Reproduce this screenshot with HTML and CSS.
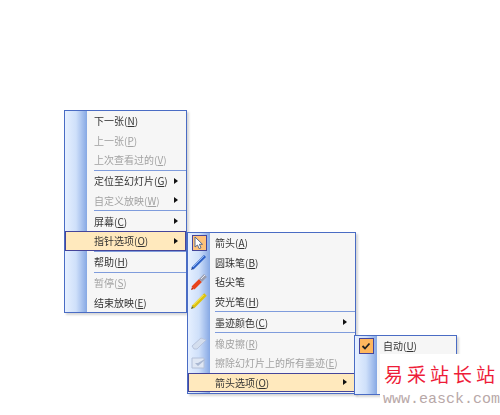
FILE: index.html
```html
<!DOCTYPE html>
<html lang="en">
<head>
  <meta charset="UTF-8">
  <title>指针选项</title>
  <link rel="stylesheet" href="styles.css">
</head>
<body>
  <div class="menu menu-main">
    <div class="row"><span class="icon"></span><span class="label">下一张(<u>N</u>)</span></div>
    <div class="row off"><span class="icon"></span><span class="label">上一张(<u>P</u>)</span></div>
    <div class="row off"><span class="icon"></span><span class="label">上次查看过的(<u>V</u>)</span></div>
    <div class="sep"></div>
    <div class="row"><span class="icon"></span><span class="label">定位至幻灯片(<u>G</u>)</span><span class="arrow"></span></div>
    <div class="row off"><span class="icon"></span><span class="label">自定义放映(<u>W</u>)</span><span class="arrow"></span></div>
    <div class="sep"></div>
    <div class="row"><span class="icon"></span><span class="label">屏幕(<u>C</u>)</span><span class="arrow"></span></div>
    <div class="row active"><span class="icon"></span><span class="label">指针选项(<u>O</u>)</span><span class="arrow"></span></div>
    <div class="sep"></div>
    <div class="row"><span class="icon"></span><span class="label">帮助(<u>H</u>)</span></div>
    <div class="sep"></div>
    <div class="row off"><span class="icon"></span><span class="label">暂停(<u>S</u>)</span></div>
    <div class="row"><span class="icon"></span><span class="label">结束放映(<u>E</u>)</span></div>
  </div>

  <div class="menu menu-pointer">
    <div class="row">
      <span class="icon"><span class="tick">
        <svg width="12" height="14" viewBox="0 0 12 14"><path d="M2 1v10l2.500-2 1.600 3.600 1.900-.8L6.400 8.300H9.500z" fill="#fff" stroke="#5a6a8a"/></svg>
      </span></span>
      <span class="label">箭头(<u>A</u>)</span>
    </div>
    <div class="row">
      <span class="icon">
        <svg width="18" height="18" viewBox="0 0 18 18"><path d="M2.500 15.500 15 3" stroke="#2f62c8" stroke-width="3"/><path d="M3 14 14 3" stroke="#8fb6f0" stroke-width="1"/><path d="M1 17l1-2.500 1.500 1.500z" fill="#1b3a80"/></svg>
      </span>
      <span class="label">圆珠笔(<u>B</u>)</span>
    </div>
    <div class="row">
      <span class="icon">
        <svg width="18" height="18" viewBox="0 0 18 18"><path d="M3 15 10.500 7.500" stroke="#e8431c" stroke-width="4"/><path d="M10.500 7.500 15.500 2.500" stroke="#9a9eb0" stroke-width="4"/><path d="M11 6 15 2" stroke="#e4e6ee" stroke-width="1"/><path d="M1 17l1-3 2 2z" fill="#c02a10"/></svg>
      </span>
      <span class="label">毡尖笔</span>
    </div>
    <div class="row">
      <span class="icon">
        <svg width="18" height="18" viewBox="0 0 18 18"><path d="M3 15 15.500 2.500" stroke="#dcc20e" stroke-width="3.500"/><path d="M3.500 13 13.500 3" stroke="#fff27a" stroke-width="1"/><path d="M1 17l1-3 2 2z" fill="#6a6a20"/></svg>
      </span>
      <span class="label">荧光笔(<u>H</u>)</span>
    </div>
    <div class="sep"></div>
    <div class="row"><span class="icon"></span><span class="label">墨迹颜色(<u>C</u>)</span><span class="arrow"></span></div>
    <div class="sep"></div>
    <div class="row off">
      <span class="icon">
        <svg width="18" height="18" viewBox="0 0 18 18"><path d="M2 12 11 4l5 2-9 9H4z" fill="#d4deee" stroke="#b8c4dc"/></svg>
      </span>
      <span class="label">橡皮擦(<u>R</u>)</span>
    </div>
    <div class="row off">
      <span class="icon">
        <svg width="18" height="18" viewBox="0 0 18 18"><path d="M2 4h12v10H2z" fill="#dfe7f4" stroke="#b4c0d8"/><path d="M5 9l3 3 8-7-3 1-5 3z" fill="#aab8d2"/></svg>
      </span>
      <span class="label">擦除幻灯片上的所有墨迹(<u>E</u>)</span>
    </div>
    <div class="row active"><span class="icon"></span><span class="label">箭头选项(<u>O</u>)</span><span class="arrow"></span></div>
  </div>

  <div class="menu menu-arrow">
    <div class="row">
      <span class="icon"><span class="tick check">
        <svg width="10" height="8" viewBox="0 0 10 8"><path d="M1.500 4 4 6.500 8.500 1.500" fill="none" stroke="#222" stroke-width="1.800"/></svg>
      </span></span>
      <span class="label">自动(<u>U</u>)</span>
    </div>
  </div>

  <div class="watermark">
    <div class="wm-name">易采站长站</div>
    <div class="wm-url">www.easck.com</div>
  </div>
</body>
</html>
```

FILE: styles.css
```css
html, body {
  margin: 0;
  height: 415px;
  overflow: hidden;
  background: white;
}
body {
  font-family: "Noto Sans CJK SC", "Liberation Sans", sans-serif;
  font-size: 10px;
  color: #333;
}
.menu {
  position: absolute;
  box-sizing: border-box;
  border: 1px solid #4a6cc4;
  background:
    linear-gradient(to right, #e6f0ff, #cfe0fa 50%, #86a8e4) no-repeat 0 0 / 22px 100%,
    #f6f6f6;
  box-shadow: 2px 2px 2px rgba(90, 90, 90, 0.25);
  filter: blur(0.35px);
}
.menu-main {
  left: 64px;
  top: 110px;
  width: 123px;
  height: 203px;
}
.menu-pointer {
  left: 187px;
  top: 232px;
  width: 169px;
  height: 162px;
}
.menu-arrow {
  left: 354px;
  top: 335px;
  width: 103px;
  height: 60px;
}
.row {
  display: flex;
  align-items: center;
  height: 19.5px;
  box-sizing: border-box;
  padding-right: 8px;
}
.row u {
  text-underline-offset: 1px;
}
.off {
  color: #a2a2a2;
}
.active {
  background: #ffe9bd;
  outline: 1px solid #45459a;
  outline-offset: -1px;
}
.icon {
  flex: none;
  width: 22px;
  height: 100%;
  display: flex;
  align-items: center;
  justify-content: center;
}
.label {
  flex: 1;
  padding-left: 7px;
  white-space: nowrap;
}
.menu-pointer .label {
  padding-left: 5px;
}
.menu-arrow .label {
  padding-left: 6px;
}
.arrow {
  flex: none;
  width: 0;
  height: 0;
  border-left: 4px solid #111;
  border-top: 3.5px solid transparent;
  border-bottom: 3.5px solid transparent;
}
.sep {
  height: 1.5px;
  margin-left: 29px;
  background: linear-gradient(#7f9cdc 1px, transparent 1px);
}
.menu-pointer .sep {
  margin-left: 27px;
}
.tick {
  width: 15px;
  height: 16px;
  display: flex;
  align-items: center;
  justify-content: center;
  box-sizing: border-box;
  background: #ffc27a;
  border: 1px solid #45459a;
}
.check {
  background: #ffb75e;
}
.watermark {
  position: absolute;
  left: 380px;
  top: 354px;
  width: 120px;
  height: 61px;
  background: white;
}
.wm-name {
  margin: 8px 0 0 4px;
  font-size: 19px;
  line-height: 24px;
  letter-spacing: 4px;
  color: #ee1c38;
  white-space: nowrap;
}
.wm-url {
  margin: 6px 0 0 3px;
  font-family: "Liberation Mono", monospace;
  font-size: 15px;
  line-height: 15px;
  color: #b8a8a8;
  white-space: nowrap;
}
```
